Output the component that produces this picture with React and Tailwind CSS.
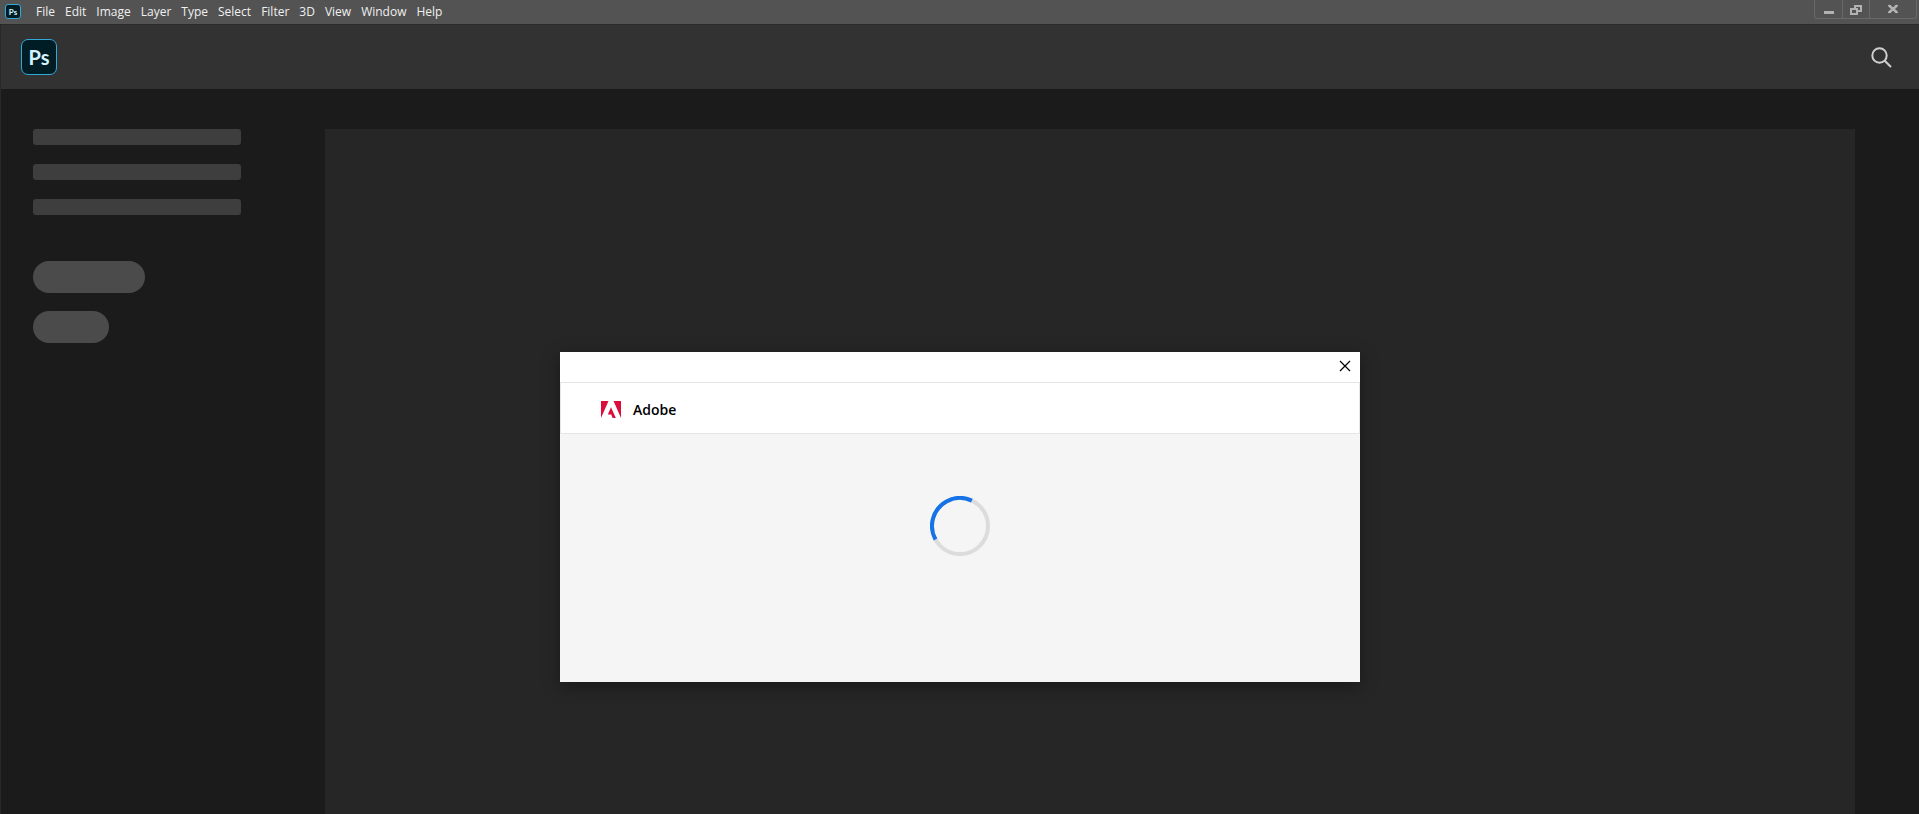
import React from 'react'

const menus = ['File', 'Edit', 'Image', 'Layer', 'Type', 'Select', 'Filter', '3D', 'View', 'Window', 'Help']

function MenuBar() {
  return (
    <header className="flex h-[25px] items-start justify-between border-b border-[#2a2a2a] bg-[#535353]">
      <div className="flex items-start pl-[5px]">
        <span className="mt-1 flex h-[15px] w-4 items-center justify-center rounded-[3px] border border-[#36a9d6] bg-[#001d26] font-['Lato',sans-serif] text-[8px] leading-none font-bold text-[#d5f2ff]">Ps</span>
        <nav className="flex gap-[10px] pt-px pl-[15px] text-[12px] leading-[22px] text-[#f0f0f0]">
          {menus.map(m => <button key={m} type="button">{m}</button>)}
        </nav>
      </div>
      <div className="mr-[2px] flex h-[19px] rounded-b-[3px] border border-t-0 border-[#696969] text-[#b2b2b2]">
        <button type="button" aria-label="Minimize" className="flex w-7 justify-center border-r border-[#696969]">
          <svg width="12" height="18" viewBox="0 0 12 18"><path d="M1 11h10v3H1z" fill="currentColor" /></svg>
        </button>
        <button type="button" aria-label="Restore" className="flex w-[27px] justify-center border-r border-[#696969]">
          <svg width="12" height="18" viewBox="0 0 12 18" fill="none" stroke="currentColor" strokeWidth="2">
            <path d="M5 6h6v5H5z" />
            <path d="M1 9h6v5H1z" fill="#535353" />
          </svg>
        </button>
        <button type="button" aria-label="Close" className="flex w-[46px] justify-center">
          <svg width="12" height="18" viewBox="0 0 12 18" fill="none" stroke="currentColor" strokeWidth="2.4">
            <path d="M2 5.5l8 7M10 5.5l-8 7" />
            <path d="M1 5.5h3M8 5.5h3M1 12.5h3M8 12.5h3" strokeWidth="1" />
          </svg>
        </button>
      </div>
    </header>
  )
}

function AppHeader() {
  return (
    <div className="flex h-16 items-center justify-between bg-[#323232] pr-[27px] pl-5">
      <div className="flex size-9 items-center justify-center rounded-[7px] border border-[#31a8d8] bg-[#001d26] pb-px font-['Lato',sans-serif] text-[20px] leading-none font-bold text-[#d5f2ff]">Ps</div>
      <button type="button" aria-label="Search">
        <svg width="21" height="21" viewBox="0 0 21 21" fill="none" stroke="#d0d0d0" strokeWidth="2">
          <circle cx="8.5" cy="8.5" r="7.2" />
          <path d="M13.7 13.7L20 20" />
        </svg>
      </button>
    </div>
  )
}

function Sidebar() {
  return (
    <aside className="w-[324px] shrink-0 pl-8">
      <div className="flex flex-col gap-[19px]">
        <div className="h-4 w-52 rounded-[3px] bg-[#3e3e3e]" />
        <div className="h-4 w-52 rounded-[3px] bg-[#3e3e3e]" />
        <div className="h-4 w-52 rounded-[3px] bg-[#3e3e3e]" />
      </div>
      <div className="mt-[46px] flex flex-col gap-[18px]">
        <div className="h-8 w-28 rounded-full bg-[#4b4b4b]" />
        <div className="h-8 w-[76px] rounded-full bg-[#4b4b4b]" />
      </div>
    </aside>
  )
}

function Spinner() {
  return (
    <svg width="60" height="60" viewBox="0 0 60 60" fill="none" strokeWidth="4" role="status" aria-label="Loading">
      <circle cx="30" cy="30" r="28" stroke="#dcdcdc" />
      <circle cx="30" cy="30" r="28" stroke="#1473e6" pathLength="360" strokeDasharray="144 216" transform="rotate(151 30 30)" />
    </svg>
  )
}

function SignInDialog() {
  return (
    <div role="dialog" aria-label="Adobe" className="w-[800px] bg-[#f5f5f5] shadow-[0_4px_16px_rgba(0,0,0,0.35)]">
      <div className="flex h-[30px] items-center justify-end bg-white pr-[9px] pb-[2px]">
        <button type="button" aria-label="Close">
          <svg width="12" height="12" viewBox="0 0 12 12" stroke="#000" strokeWidth="1.2"><path d="M1 1l10 10M11 1L1 11" /></svg>
        </button>
      </div>
      <div className="flex h-[52px] items-center gap-3 border border-[#e6e6e6] bg-white pt-[3px] pl-10 text-black">
        <svg width="20" height="17" viewBox="0 0 20 17" fill="#dc0c3c">
          <path d="M0 0h7.5L0 17zM12.5 0H20v17zM10 6.3L14.8 17h-3.2l-1.4-3.4H6.8z" />
        </svg>
        <span className="text-[14px] leading-5 font-semibold">Adobe</span>
      </div>
      <div className="flex h-[248px] justify-center pt-[62px]">
        <Spinner />
      </div>
    </div>
  )
}

export default function App() {
  return (
    <div className="flex min-h-screen flex-col bg-[#1b1b1b] font-['Open_Sans','Noto_Sans',sans-serif]">
      <MenuBar />
      <div className="relative flex flex-1 flex-col border-l border-[#282828]">
        <AppHeader />
        <div className="flex flex-1 pt-10 pr-16">
          <Sidebar />
          <main className="flex-1 bg-[#262626]" />
        </div>
        <div className="absolute inset-x-0 top-[327px] flex justify-center">
          <SignInDialog />
        </div>
      </div>
    </div>
  )
}
